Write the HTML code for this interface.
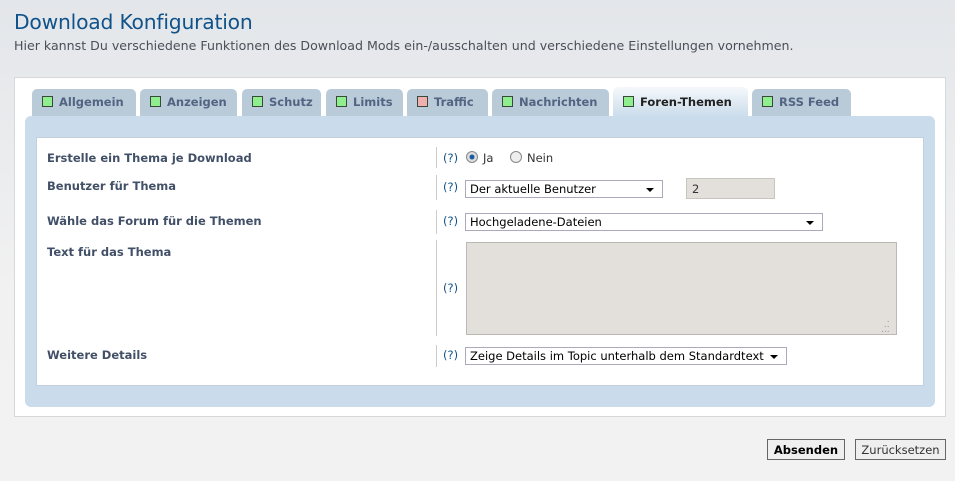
<!DOCTYPE html>
<html><head><meta charset="utf-8"><style>
*{margin:0;padding:0;box-sizing:border-box}
body{width:955px;height:481px;overflow:hidden;background:linear-gradient(#e3e6ea,#f1f1f1 60%,#f2f2f2);font-family:"DejaVu Sans","Liberation Sans",sans-serif;position:relative;color:#333}
.a{position:absolute;white-space:nowrap}
h1{position:absolute;left:14px;top:10px;font-size:20.3px;font-weight:normal;color:#105289;letter-spacing:-0.2px}
.sub{left:14px;top:38px;font-size:12.6px;color:#4a5058}
.panel{left:14px;top:77px;width:932px;height:340px;background:#fff;border:1px solid #d6d8dc}
.tab{top:89px;height:27px;background:#b9cad9;border-radius:5px 5px 0 0;font-size:11.5px;font-weight:bold;color:#536482;padding:6px 0 0 10px}
.tab i{display:inline-block;width:11px;height:11px;background:#8fef8f;border:1px solid #3a4a3a;vertical-align:-1px;margin-right:6px}
.tab.act{top:87px;height:30px;background:linear-gradient(#f5f8fb,#cadceb);color:#222;padding-top:8px}
.blue{left:25px;top:116px;width:910px;height:291px;background:#cadceb;border-radius:6px}
.white{left:36px;top:137px;width:888px;height:249px;background:#fff;border:1px solid #c3cfdc}
.lbl{left:47px;font-size:11.5px;font-weight:bold;color:#425067}
.q{left:443px;font-size:11.5px;color:#105289}
.div{left:436px;width:1px;background:#ccc}
.sel{height:18px;border:1px solid #aab;background:#fff;font-size:11.5px;color:#000;padding:1px 0 0 4px}
.sel:after{content:"";position:absolute;right:8px;top:7px;border:4px solid transparent;border-top:4px solid #000;border-bottom:0}
.btn{top:439px;height:21px;border:1px solid #666;background:#efefef;font-size:11.5px;padding:3px 0 0 0;text-align:center;color:#000}
.rad{width:12px;height:12px;border-radius:50%;border:1px solid #888;background:#eee}
</style></head><body>
<h1>Download Konfiguration</h1>
<div class="a sub">Hier kannst Du verschiedene Funktionen des Download Mods ein-/ausschalten und verschiedene Einstellungen vornehmen.</div>
<div class="a panel"></div>
<div class="a tab" style="left:32px;width:104px"><i></i>Allgemein</div>
<div class="a tab" style="left:140px;width:97px"><i></i>Anzeigen</div>
<div class="a tab" style="left:242px;width:79px"><i></i>Schutz</div>
<div class="a tab" style="left:326px;width:77px"><i></i>Limits</div>
<div class="a tab" style="left:407px;width:81px"><i style="background:#f0b0b0"></i>Traffic</div>
<div class="a tab" style="left:492px;width:117px"><i></i>Nachrichten</div>
<div class="a blue"></div>
<div class="a tab act" style="left:613px;width:135px"><i></i>Foren-Themen</div>
<div class="a tab" style="left:752px;width:99px"><i></i>RSS Feed</div>
<div class="a white"></div>

<div class="a lbl" style="top:151px">Erstelle ein Thema je Download</div>
<div class="a lbl" style="top:179px">Benutzer für Thema</div>
<div class="a lbl" style="top:214px">Wähle das Forum für die Themen</div>
<div class="a lbl" style="top:245px">Text für das Thema</div>
<div class="a lbl" style="top:348px">Weitere Details</div>

<div class="a div" style="top:147px;height:21px"></div>
<div class="a div" style="top:175px;height:25px"></div>
<div class="a div" style="top:210px;height:24px"></div>
<div class="a div" style="top:240px;height:96px"></div>
<div class="a div" style="top:345px;height:22px"></div>

<div class="a q" style="top:151px">(?)</div>
<div class="a q" style="top:180px">(?)</div>
<div class="a q" style="top:214px">(?)</div>
<div class="a q" style="top:281px">(?)</div>
<div class="a q" style="top:348px">(?)</div>

<div class="a rad" style="left:466px;top:151px;background:radial-gradient(#1a5aa0 30%,#ddd 40%)"></div>
<div class="a" style="left:483px;top:151px;font-size:11.5px;color:#333">Ja</div>
<div class="a rad" style="left:510px;top:151px"></div>
<div class="a" style="left:527px;top:151px;font-size:11.5px;color:#333">Nein</div>

<div class="a sel" style="left:465px;top:180px;width:198px">Der aktuelle Benutzer</div>
<div class="a" style="left:686px;top:178px;width:89px;height:21px;background:#e3e0db;border:1px solid #c8c4bf;font-size:11.5px;padding:3px 0 0 5px;color:#333">2</div>
<div class="a sel" style="left:465px;top:213px;width:358px">Hochgeladene-Dateien</div>
<div class="a" style="left:466px;top:242px;width:431px;height:93px;background:#e3e0db;border:1px solid #bcb8b2"></div>
<div class="a" style="left:881px;top:318px;font-size:9px;color:#999;line-height:5px">&nbsp;&nbsp;.<br>&nbsp;..<br>...</div>
<div class="a sel" style="left:465px;top:347px;width:322px">Zeige Details im Topic unterhalb dem Standardtext</div>

<div class="a btn" style="left:767px;width:78px;font-weight:bold">Absenden</div>
<div class="a btn" style="left:855px;width:91px;color:#333">Zurücksetzen</div>
</body></html>
